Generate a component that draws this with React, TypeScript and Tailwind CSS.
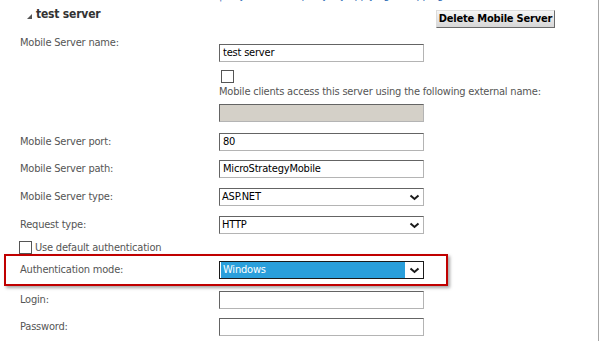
import React from "react";

const font = "font-['DejaVu_Sans_Condensed','Liberation_Sans',sans-serif]";

function Chevron() {
  return (
    <svg width="11" height="7" viewBox="0 0 11 7" className="shrink-0">
      <polyline
        points="1.5,1.5 5.5,5 9.5,1.5"
        fill="none"
        stroke="#1a1a1a"
        strokeWidth="2"
      />
    </svg>
  );
}

function TextBox({ value, disabled }: { value?: string; disabled?: boolean }) {
  return (
    <div
      className={
        "w-[205px] h-[18px] flex items-center pl-[3px] text-[11px] text-black border border-t-[#646464] border-l-[#646464] border-b-[#b4b4b4] border-r-[#b4b4b4] " +
        (disabled ? "bg-[#d4d0c8]" : "bg-white")
      }
    >
      {value}
    </div>
  );
}

function Select({ value, active }: { value: string; active?: boolean }) {
  return (
    <div
      className={
        "w-[205px] h-[18px] flex items-center border " +
        (active
          ? "border-[#1b1b1b] bg-white"
          : "border-t-[#646464] border-l-[#646464] border-b-[#b4b4b4] border-r-[#b4b4b4] bg-white")
      }
    >
      <div
        className={
          "flex-1 h-full flex items-center pl-[2px] text-[11px] " +
          (active ? "bg-[#2a9fdb] text-white m-[1px] h-[14px]" : "text-black")
        }
      >
        {value}
      </div>
      <div className="w-[17px] flex justify-center">
        <Chevron />
      </div>
    </div>
  );
}

function Row({
  label,
  children,
  h,
}: {
  label: string;
  children: React.ReactNode;
  h: string;
}) {
  return (
    <div className={"flex items-center " + h}>
      <div className="w-[219px] pl-[20px] text-[#555]">{label}</div>
      {children}
    </div>
  );
}

function Checkbox() {
  return <div className="w-[13px] h-[13px] border border-[#555] bg-white shrink-0" />;
}

export default function App() {
  return (
    <div
      className={
        "w-[599px] h-[341px] bg-white border-r border-[#a6a6a6] overflow-hidden text-[11px] leading-[14px] tracking-[-0.2px] " +
        font
      }
    >
      {/* line above, mostly scrolled out of view */}
      <div className="h-0 flex">
        <div className="-translate-y-[11px] pl-[219px] text-[#2f6db5] whitespace-nowrap">
          | only if behind a proxy, by applying a mapping
        </div>
      </div>

      {/* header */}
      <div className="flex items-start h-[31px]">
        <div className="pl-[27px] pt-[7px] flex items-center gap-[4px] font-bold text-[#333] text-[12px]">
          <svg width="5" height="5" viewBox="0 0 5 5" className="mt-[4px]">
            <polygon points="5,0 5,5 0,5" fill="#555" />
          </svg>
          test server
        </div>
        <button className="ml-auto mr-[43px] mt-[10px] h-[18px] w-[119px] px-0 whitespace-nowrap flex items-center justify-center font-bold text-black text-[11px] bg-gradient-to-b from-[#f6f6f6] to-[#d6d6d6] border border-t-[#dcdcdc] border-l-[#dcdcdc] border-b-[#6a6a6a] border-r-[#6a6a6a]">
          Delete Mobile Server
        </button>
      </div>

      {/* name */}
      <div className="flex items-start h-[31px]">
        <div className="w-[219px] pl-[20px] pt-[5px] text-[#555]">Mobile Server name:</div>
        <div className="mt-[13px]">
          <TextBox value="test server" />
        </div>
      </div>

      <div className="pl-[221px] mt-[8px]">
        <Checkbox />
      </div>
      <div className="pl-[219px] mt-[2px] text-[#555] whitespace-nowrap">
        Mobile clients access this server using the following external name:
      </div>
      <div className="pl-[219px] mt-[5px]">
        <TextBox disabled />
      </div>

      <div className="mt-[6px]">
        <Row label="Mobile Server port:" h="h-[27px]">
          <TextBox value="80" />
        </Row>
        <Row label="Mobile Server path:" h="h-[28px]">
          <TextBox value="MicroStrategyMobile" />
        </Row>
        <Row label="Mobile Server type:" h="h-[28px]">
          <Select value="ASP.NET" />
        </Row>
        <Row label="Request type:" h="h-[28px]">
          <Select value="HTTP" />
        </Row>
      </div>

      <div className="flex items-end gap-[3px] h-[15px] pl-[19px]">
        <Checkbox />
        <span className="text-[#555] leading-[13px]">Use default authentication</span>
      </div>

      {/* highlighted row */}
      <div className="ml-[4px] w-[444px] h-[32px] border-2 border-[#c00000] shadow-[2px_2px_3px_rgba(0,0,0,0.35)] flex items-center">
        <div className="w-[213px] pl-[14px] text-[#555]">Authentication mode:</div>
        <Select value="Windows" active />
      </div>

      <Row label="Login:" h="h-[27px]">
        <TextBox />
      </Row>
      <Row label="Password:" h="h-[28px]">
        <TextBox />
      </Row>
    </div>
  );
}
